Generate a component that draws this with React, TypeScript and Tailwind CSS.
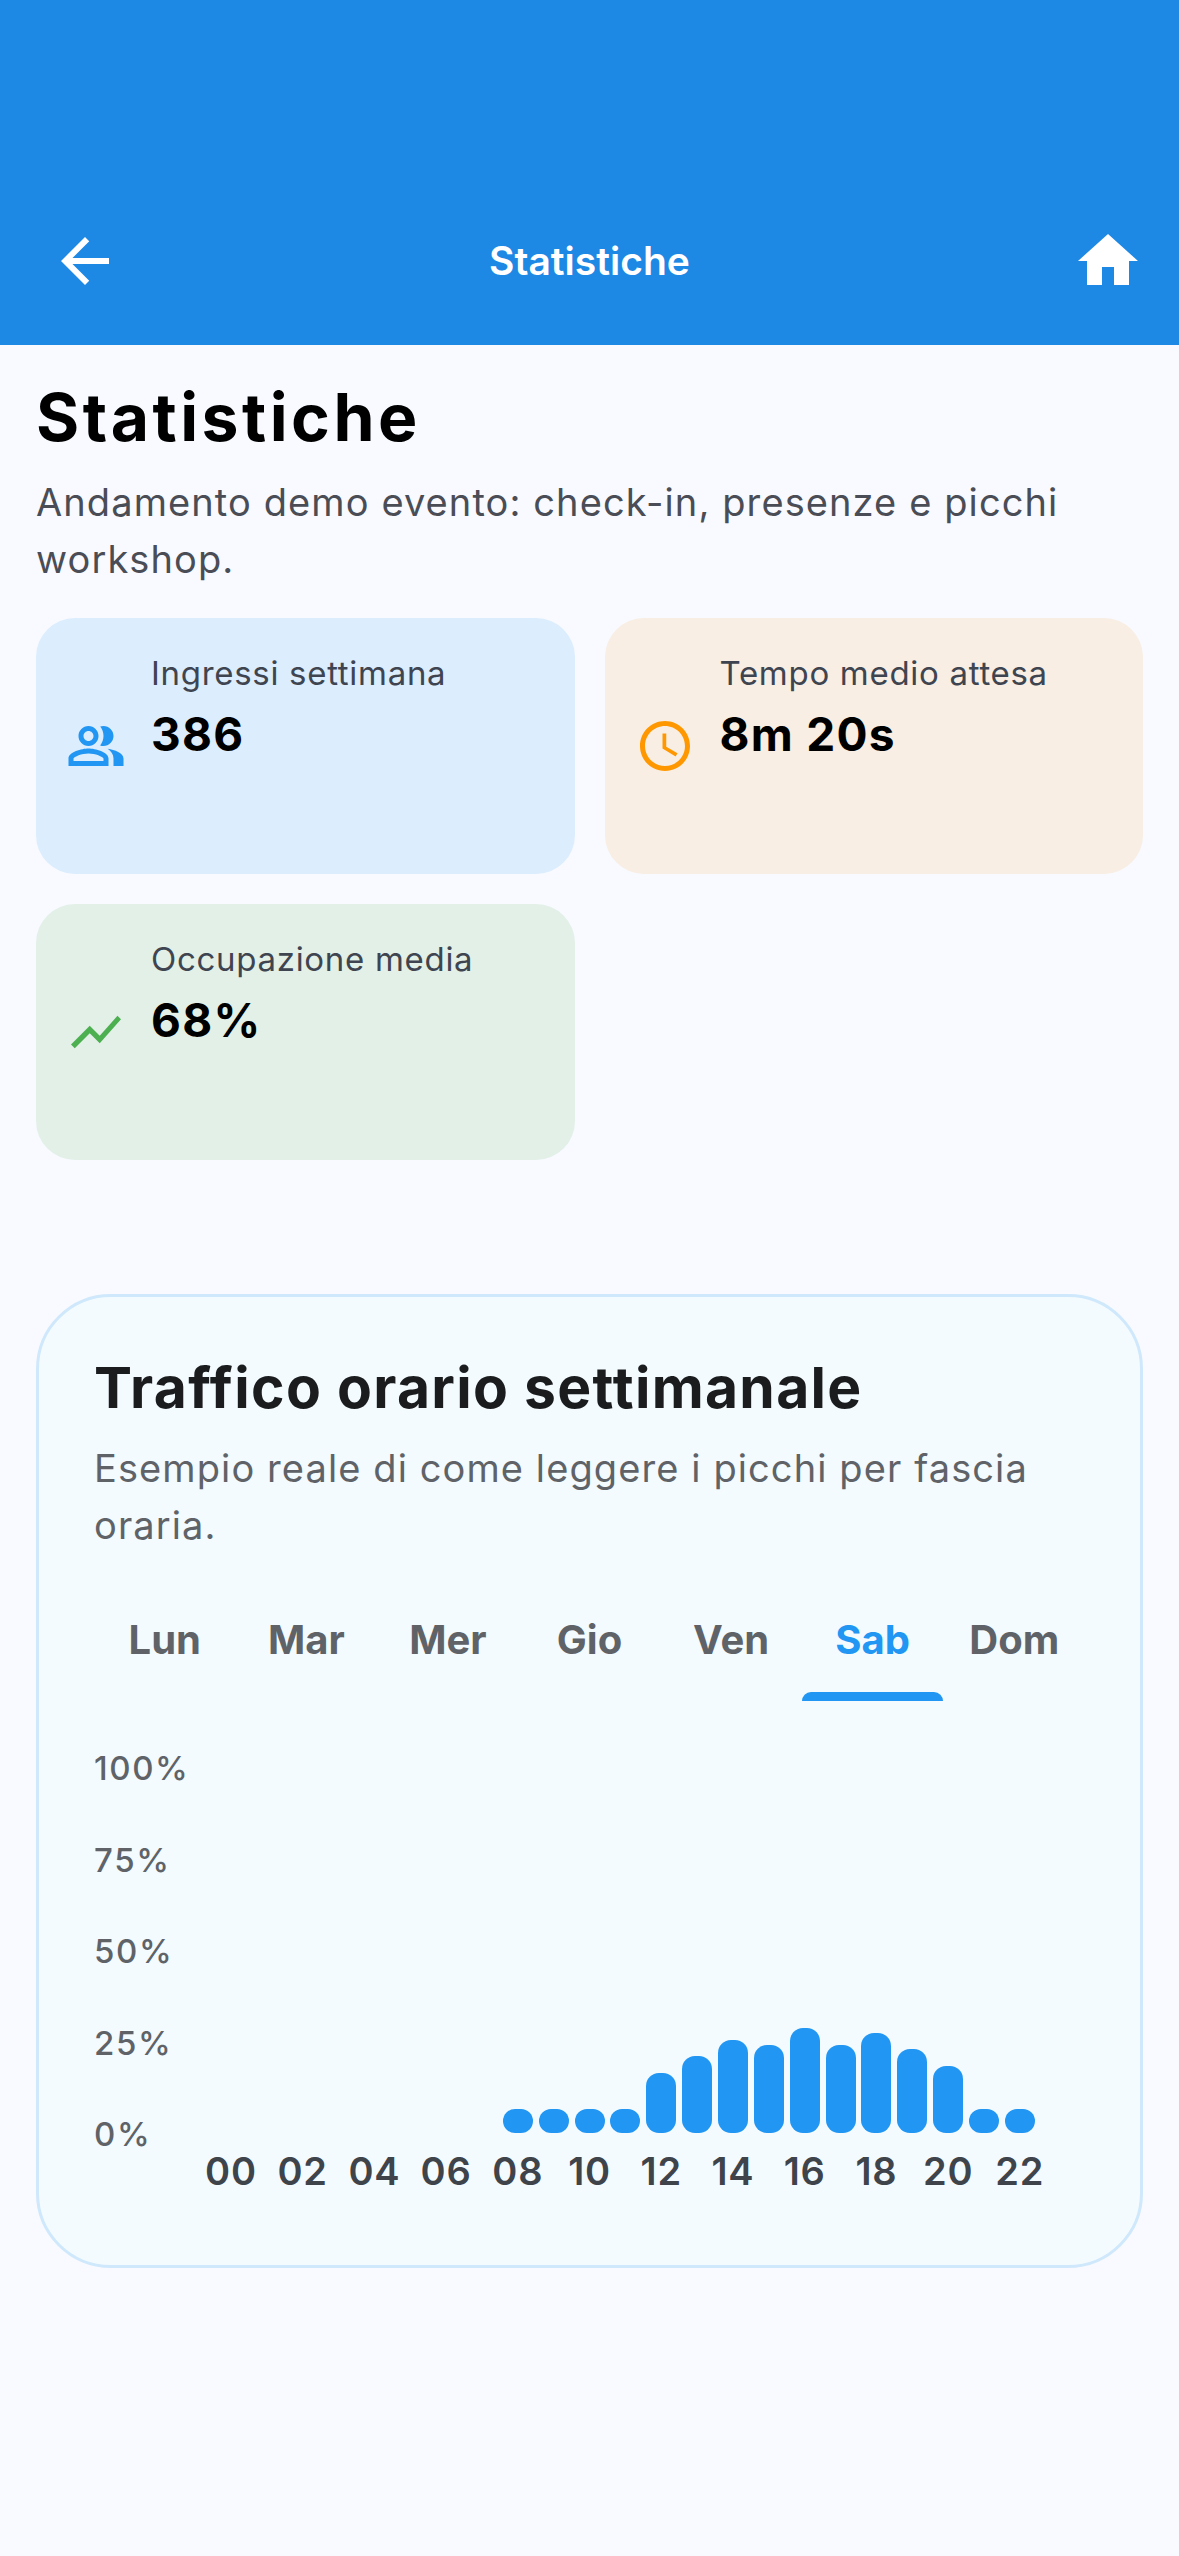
import React from "react";

const hours = [
  0, 0, 0, 0, 0, 0, 0, 0, 24, 24, 24, 24, 60, 77, 93, 88, 105, 88, 100, 84, 67, 24, 24, 0,
];
const days = ["Lun", "Mar", "Mer", "Gio", "Ven", "Sab", "Dom"];
const yLabels = ["100%", "75%", "50%", "25%", "0%"];

const StatCard: React.FC<{
  bg: string;
  label: string;
  value: string;
  icon: React.ReactNode;
}> = ({ bg, label, value, icon }) => (
  <div className={`${bg} h-[256px] rounded-[39px] p-[30px] flex items-center gap-[25px]`}>
    {icon}
    <div className="self-start flex flex-col">
      <div className="text-[33px] leading-[50px] tracking-[0.7px] text-[#3f4550]">{label}</div>
      <div className="text-[46px] leading-[72px] font-bold tracking-[1.3px] text-black">{value}</div>
    </div>
  </div>
);

const App: React.FC = () => {
  return (
    <div className="w-[1179px] h-[2556px] bg-[#f8faff] overflow-hidden font-['Inter',sans-serif]">
      <header className="h-[345px] bg-[#1e88e5] flex items-end justify-between pl-[49px] pr-[35px] pb-[48px]">
        <svg viewBox="0 0 24 24" className="w-[72px] h-[72px] fill-white">
          <path d="M20 11H7.83l5.59-5.59L12 4l-8 8 8 8 1.41-1.41L7.83 13H20v-2z" />
        </svg>
        <div className="mr-[14px] text-[39px] leading-[72px] font-semibold text-white">Statistiche</div>
        <svg viewBox="0 0 24 24" className="w-[72px] h-[72px] fill-white">
          <path d="M10 20v-6h4v6h5v-8h3L12 3 2 12h3v8z" />
        </svg>
      </header>

      <main className="px-[36px] pt-[33px]">
        <h1 className="text-[66px] leading-[78px] font-bold tracking-[3.5px] text-black">Statistiche</h1>
        <p className="mt-[18px] text-[38px] leading-[57px] tracking-[1.1px] text-[#4a4d55]">
          Andamento demo evento: check-in, presenze e picchi workshop.
        </p>

        <div className="mt-[30px] grid grid-cols-2 gap-[30px]">
          <StatCard
            bg="bg-[#dcedfd]"
            label="Ingressi settimana"
            value="386"
            icon={
              <svg viewBox="0 0 24 24" className="w-[60px] h-[60px] shrink-0 fill-[#2196f3]">
                <path d="M16.67 13.13C18.04 14.06 19 15.32 19 17v3h4v-3c0-2.18-3.57-3.47-6.33-3.87z" />
                <path d="M15 12c2.21 0 4-1.79 4-4s-1.79-4-4-4c-.47 0-.91.1-1.33.24C14.5 5.27 15 6.58 15 8s-.5 2.73-1.33 3.76c.42.14.86.24 1.33.24z" />
                <path d="M9 12c2.21 0 4-1.79 4-4s-1.79-4-4-4-4 1.79-4 4 1.79 4 4 4zm0-6c1.1 0 2 .9 2 2s-.9 2-2 2-2-.9-2-2 .9-2 2-2z" />
                <path d="M9 13c-2.67 0-8 1.34-8 4v3h16v-3c0-2.66-5.33-4-8-4zm6 5H3v-.99C3.2 16.29 6.3 15 9 15s5.8 1.29 6 2v1z" />
              </svg>
            }
          />
          <StatCard
            bg="bg-[#f8eee3]"
            label="Tempo medio attesa"
            value="8m 20s"
            icon={
              <svg viewBox="0 0 24 24" className="w-[60px] h-[60px] shrink-0 fill-[#ff9800]">
                <path d="M11.99 2C6.47 2 2 6.48 2 12s4.47 10 9.99 10C17.52 22 22 17.52 22 12S17.52 2 11.99 2zM12 20c-4.42 0-8-3.58-8-8s3.58-8 8-8 8 3.58 8 8-3.58 8-8 8zm.5-13H11v6l5.25 3.15.75-1.23-4.5-2.67z" />
              </svg>
            }
          />
          <StatCard
            bg="bg-[#e3f0e8]"
            label="Occupazione media"
            value="68%"
            icon={
              <svg viewBox="0 0 24 24" className="w-[60px] h-[60px] shrink-0 fill-[#4caf50]">
                <path d="M3.5 18.49l6-6.01 4 4L22 6.92l-1.41-1.41-7.09 7.97-4-4L2 16.99z" />
              </svg>
            }
          />
        </div>

        <section className="mt-[134px] h-[974px] rounded-[75px] border-[3px] border-[#cfe8fb] bg-[#f3fbff] px-[55px] pt-[53px]">
          <h2 className="text-[57px] leading-[76px] font-bold tracking-[1.3px] text-[#1a1c1e]">
            Traffico orario settimanale
          </h2>
          <p className="mt-[14px] text-[38px] leading-[57px] tracking-[1.1px] text-[#5f6368]">
            Esempio reale di come leggere i picchi per fascia oraria.
          </p>

          <div className="mt-[47px] flex">
            {days.map((d) => (
              <div
                key={d}
                className={`flex-1 h-[91px] flex justify-center pt-[14px] text-[40px] leading-[50px] font-bold ${
                  d === "Sab" ? "text-[#2196f3] relative" : "text-[#5f6368]"
                }`}
              >
                {d}
                {d === "Sab" && (
                  <span className="absolute left-0 right-0 bottom-[-9px] h-[9px] rounded-t-[9px] bg-[#2196f3]" />
                )}
              </div>
            ))}
          </div>

          <div className="mt-[54px] flex">
            <div className="w-[119px] shrink-0 flex flex-col gap-[46.5px]">
              {yLabels.map((l) => (
                <div key={l} className="text-[33px] leading-[45px] font-medium tracking-[1.6px] text-[#5f6368]">
                  {l}
                </div>
              ))}
            </div>
            <div className="flex flex-col">
              <div className="h-[387px] flex items-end">
                {hours.map((h, i) => (
                  <div key={i} className="w-[35.86px] flex justify-center">
                    {h > 0 && <div className="w-[30px] rounded-[13px] bg-[#2196f3]" style={{ height: h }} />}
                  </div>
                ))}
              </div>
              <div className="mt-[15px] flex">
                {hours.map((_, i) => (
                  <div key={i} className="w-[35.86px] flex justify-center">
                    {i % 2 === 0 && (
                      <span className="text-[38px] leading-[46px] font-semibold tracking-[0.8px] text-[#3f444b]">
                        {String(i).padStart(2, "0")}
                      </span>
                    )}
                  </div>
                ))}
              </div>
            </div>
          </div>
        </section>
      </main>
    </div>
  );
};

export default App;
